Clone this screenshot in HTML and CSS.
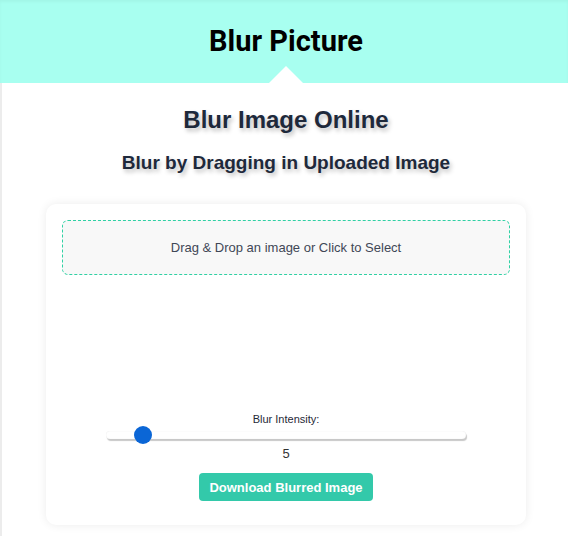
FILE: index.html
```html
<!DOCTYPE html>
<html>
<head>
<meta charset="utf-8">
<link rel="stylesheet" href="styles.css">
</head>
<body>
<header class="top">
  <h1 class="brand">Blur Picture</h1>
  <span class="notch"></span>
</header>
<main class="main">
  <h2 class="title">Blur Image Online</h2>
  <h3 class="subtitle">Blur by Dragging in Uploaded Image</h3>
  <section class="card">
    <div class="drop">Drag &amp; Drop an image or Click to Select</div>
    <div class="canvas-area"></div>
    <div class="controls">
      <label class="label">Blur Intensity:</label>
      <input class="slider" type="range" min="1" max="50" value="5">
      <div class="value">5</div>
      <button class="btn">Download Blurred Image</button>
    </div>
  </section>
</main>
</body>
</html>
```
FILE: styles.css
```css
* { box-sizing: border-box; }
html, body { margin: 0; padding: 0; background: #fff; }
body { font-family: "Liberation Sans", Arial, sans-serif; color: #1f2937; }
.top {
  position: relative;
  height: 83px;
  background: #a8fff0;
  box-shadow: inset 0 2px 3px rgba(0,0,0,0.04);
  display: flex;
  justify-content: center;
  padding-left: 4px;
}
.brand {
  margin: 25px 0 0;
  font-family: Roboto, "Liberation Sans", sans-serif;
  font-weight: 700;
  font-size: 29px;
  line-height: 32px;
  color: #000;
}
.notch {
  position: absolute;
  left: calc(50% + 2px);
  bottom: 0;
  transform: translateX(-50%);
  width: 0; height: 0;
  border-left: 17px solid transparent;
  border-right: 17px solid transparent;
  border-bottom: 17px solid #fff;
}
.main {
  border-left: 2px solid #ececec;
  padding: 0 0 10px 2px;
  min-height: calc(100vh - 83px);
  display: flex;
  flex-direction: column;
  align-items: center;
}
.title {
  margin: 23px 0 0;
  font-size: 24px;
  line-height: 28px;
  font-weight: 700;
  color: #1e293b;
  text-shadow: 2px 3px 4px rgba(0,0,0,0.25);
}
.subtitle {
  margin: 17px 0 0;
  font-size: 19px;
  line-height: 23px;
  font-weight: 700;
  color: #1e293b;
  text-shadow: 2px 3px 4px rgba(0,0,0,0.25);
}
.card {
  margin-top: 30px;
  width: 480px;
  background: #fff;
  border-radius: 10px;
  box-shadow: 0 0 10px rgba(0,0,0,0.08);
  padding: 16px 16px 24px;
  display: flex;
  flex-direction: column;
  align-items: center;
}
.drop {
  width: 100%;
  height: 55px;
  border: 1px dashed #2fd1a4;
  border-radius: 6px;
  background: #f8f8f8;
  display: flex;
  align-items: center;
  justify-content: center;
  font-size: 13px;
  color: #3f4756;
}
.canvas-area { height: 137px; }
.controls {
  display: flex;
  flex-direction: column;
  align-items: center;
}
.label {
  font-size: 11px;
  line-height: 14px;
  color: #1f2937;
}
.slider {
  -webkit-appearance: none;
  appearance: none;
  width: 360px;
  height: 8px;
  margin: 5px 0 0;
  background: #fff;
  border-radius: 5px;
  box-shadow: 1px 2px 1px #c8c8c8, inset 0 0 1px #ddd;
  outline: none;
}
.slider::-webkit-slider-thumb {
  -webkit-appearance: none;
  appearance: none;
  width: 18px;
  height: 18px;
  border-radius: 50%;
  background: #0b66d6;
  border: none;
  cursor: pointer;
}
.value {
  margin-top: 7px;
  font-size: 13px;
  line-height: 16px;
  color: #333;
}
.btn {
  margin-top: 11px;
  width: 174px;
  height: 28px;
  border: none;
  border-radius: 4px;
  background: #33c9aa;
  color: #fff;
  font-family: "Liberation Sans", Arial, sans-serif;
  font-weight: 700;
  font-size: 13px;
  padding: 0;
}
```
